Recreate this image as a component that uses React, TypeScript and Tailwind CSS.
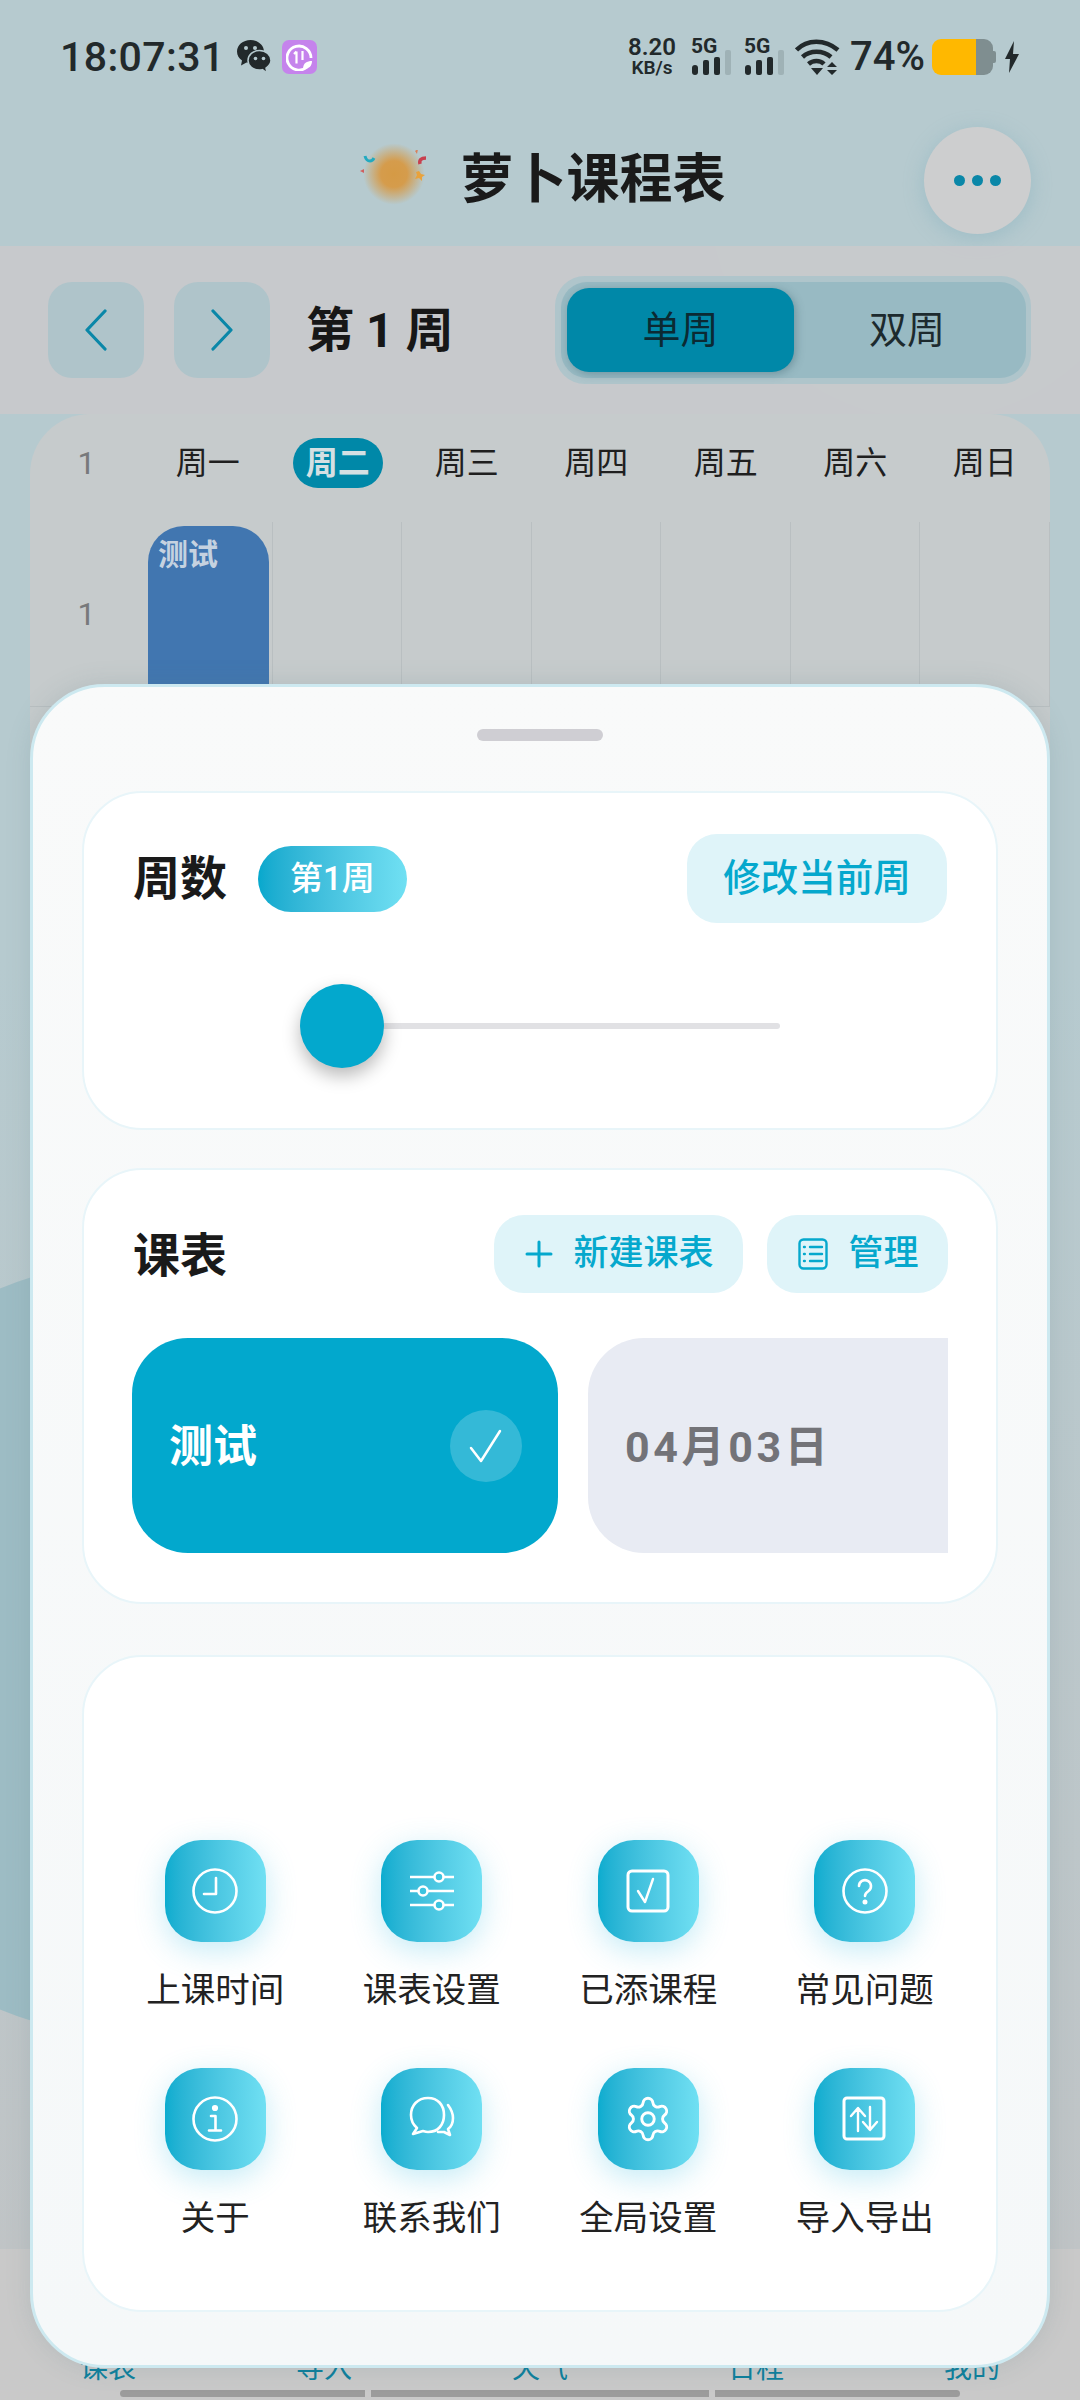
import { Settings } from 'lucide-react'
import type { ReactNode } from 'react'

const days = ['周一', '周二', '周三', '周四', '周五', '周六', '周日']
const tabs = ['课表', '导入', '天气', '日程', '我的']

function Signal() {
  return (
    <div className="flex flex-col items-start w-[42px] mb-[3px]">
      <span className="text-[21px] leading-[21px] font-bold text-[#22292b] ml-[1px]">5G</span>
      <svg width="42" height="26" viewBox="0 0 42 26" className="-mt-[7px]">
        <rect x="2" y="15" width="6" height="10" rx="3" fill="#22292b" />
        <rect x="13" y="10" width="6" height="15" rx="2" fill="#22292b" />
        <rect x="24" y="7" width="6" height="18" rx="2" fill="#22292b" />
        <rect x="35" y="0" width="6" height="25" rx="2" fill="#9fb2b6" />
      </svg>
    </div>
  )
}

function Wifi() {
  return (
    <svg width="46" height="38" viewBox="0 0 46 38" fill="none" stroke="#22292b" strokeWidth="4.5" strokeLinecap="butt">
      <path d="M1.5 12C12 1 30 1 43 12" />
      <path d="M7.5 19C15 12 28 12 36 19" />
      <path d="M13.5 26C18 22 25 22 29 26" />
      <path d="M16 30h12l-6 7z" fill="#22292b" stroke="none" />
      <path d="M32 29l5-5 5 5zM32 32h10l-5 5z" fill="#22292b" stroke="none" />
    </svg>
  )
}

function WeChat() {
  return (
    <svg width="34" height="34" viewBox="0 0 34 34">
      <path d="M13.5 0C6 0 0 5 0 11.5c0 3.800 2 7 5 9l-1 5 5.500-3c1.500.4 3 .6 4 .6C22 23 27 18 27 11.500 27 5 21 0 13.500 0z" fill="#22292b" />
      <circle cx="9" cy="8" r="2" fill="#b6cacf" />
      <circle cx="18" cy="8" r="2" fill="#b6cacf" />
      <path d="M22.500 10.500C16 10.500 11 15 11 20.500S16 30 22.500 30c1 0 2-.1 3-.4L30 33l-1-5c3-2 5-4.500 5-7.500 0-5.500-5-10-11.500-10z" fill="#22292b" stroke="#b6cacf" strokeWidth="1.500" />
      <circle cx="18.500" cy="18.500" r="1.800" fill="#b6cacf" />
      <circle cx="26.500" cy="18.500" r="1.800" fill="#b6cacf" />
    </svg>
  )
}

function AppBadge() {
  return (
    <div className="w-[35px] h-[34px] rounded-[7px] bg-[#c583ec] flex items-center justify-center">
      <svg width="27" height="27" viewBox="0 0 27 27" fill="none" stroke="#fff" strokeWidth="2.800">
        <path d="M21 23a12 12 0 1 1 4-9" />
        <path d="M10.500 7.500v12M8 10l2.500-2.500M16.500 7v9" strokeWidth="2.200" />
        <path d="M17 25c0-6 4-8 9-8 0 5-3 8-9 8z" fill="#fff" stroke="none" />
      </svg>
    </div>
  )
}

function Logo() {
  return (
    <div className="relative w-[68px] h-[60px]">
      <div className="absolute left-[3px] top-[-7px] w-[62px] h-[62px] rounded-full bg-[radial-gradient(circle,#d59a45_0%,#d59c4c_30%,rgba(205,165,100,0)_70%)]" />
      <svg width="68" height="60" viewBox="0 0 68 60" className="absolute left-0 top-0">
        <path d="M5 6c1 4 3 5 5 5s3-1 4-3" fill="none" stroke="#22aac0" strokeWidth="3" />
        <path d="M4 19l-4 2 4 2z" fill="#d0605f" />
        <path d="M55 1l3-2-1 5z" fill="#d9805a" />
        <path d="M66 8c-5 0-7 2-6 6" fill="none" stroke="#c8404f" strokeWidth="3.500" />
        <path d="M59 21l2 3 4 1-3 2 0 4-3-3-4 1 2-4-1-3z" fill="#e9a23b" />
      </svg>
    </div>
  )
}

function Sheet({ children }: { children: ReactNode }) {
  return (
    <div className="absolute left-[30px] top-[684px] w-[1020px] h-[1684px] rounded-[75px] border-[3px] border-[#cde9f0] bg-gradient-to-b from-[#f9fafa] to-[#f5f8f9] shadow-[0_0_24px_rgba(90,120,130,0.18)] px-[49px]">
      {children}
    </div>
  )
}

const iconProps = { width: 48, height: 48, viewBox: '0 0 48 48', fill: 'none', stroke: '#fff', strokeWidth: 2.6, strokeLinecap: 'round' as const, strokeLinejoin: 'round' as const }

const actions: { label: string; icon: ReactNode }[] = [
  {
    label: '上课时间',
    icon: (
      <svg {...iconProps}>
        <circle cx="24" cy="24" r="21.500" />
        <path d="M25 11v16H13" />
      </svg>
    ),
  },
  {
    label: '课表设置',
    icon: (
      <svg {...iconProps} strokeLinecap="butt">
        <path d="M2 10h44M2 24h44M2 38h44" />
        <circle cx="31" cy="10" r="4.500" fill="#3cc4e0" />
        <circle cx="15" cy="24" r="4.500" fill="#3cc4e0" />
        <circle cx="31" cy="38" r="4.500" fill="#3cc4e0" />
      </svg>
    ),
  },
  {
    label: '已添课程',
    icon: (
      <svg {...iconProps} strokeWidth="3">
        <rect x="4" y="4" width="40" height="40" rx="4" />
        <path d="M14 24l7 11 8-23" strokeWidth="2.400" />
      </svg>
    ),
  },
  {
    label: '常见问题',
    icon: (
      <svg {...iconProps}>
        <circle cx="24" cy="24" r="21.500" />
        <path d="M18 19a6 6 0 1 1 9.500 5c-2.300 1.500-3.500 2.500-3.500 5" />
        <circle cx="24" cy="35" r="1.200" fill="#fff" />
      </svg>
    ),
  },
  {
    label: '关于',
    icon: (
      <svg {...iconProps}>
        <circle cx="24" cy="24" r="21.500" />
        <circle cx="24" cy="13" r="1.800" fill="#fff" />
        <path d="M20 21h4.500v14M18 35.500h12" />
      </svg>
    ),
  },
  {
    label: '联系我们',
    icon: (
      <svg {...iconProps}>
        <path d="M20 3C10 3 3 10 3 20c0 6 2.500 10 6 13l-4 6 10-3c2 .6 3.500 1 5 1 10 0 16-7 16-17S30 3 20 3z" />
        <path d="M40 10c3 4 5 8 5 13 0 5-2 9-5 11l2 6-6-3h-6" />
      </svg>
    ),
  },
  {
    label: '全局设置',
    icon: <Settings size={50} color="#fff" strokeWidth={1.400} />,
  },
  {
    label: '导入导出',
    icon: (
      <svg {...iconProps} strokeWidth="3">
        <rect x="3" y="3" width="40" height="41" rx="3" />
        <path d="M17 36V14M10 21l7-8 7 8M29 12v22M22 27l7 8 7-8" strokeWidth="2.400" />
      </svg>
    ),
  },
]

export default function App() {
  return (
    <div className="relative w-[1080px] h-[2400px] overflow-hidden flex flex-col font-['Roboto','Noto_Sans_CJK_SC',sans-serif] text-[#1c1c1c] bg-gradient-to-b from-[#b6cacf] from-40% to-[#c0c4c6] to-[94%]">
      {/* blobs behind everything */}
      <div className="absolute left-[-241px] top-[1259px] w-[780px] h-[780px] rounded-full bg-[#9dbcc4]" />
      <div className="absolute left-[710px] top-[-20px] w-[440px] h-[440px] rounded-full bg-[#b9cfd2]" />

      {/* status bar */}
      <div className="relative h-[114px] shrink-0 flex items-center justify-between pl-[60px] pr-[61px] bg-[#b6cacf] text-[#22292b]">
        <div className="flex items-center">
          <span className="text-[41px] font-medium w-[177px] tracking-[0.4px] mt-[1px]">18:07:31</span>
          <WeChat />
          <div className="ml-[11px]">
            <AppBadge />
          </div>
        </div>
        <div className="flex items-center">
          <div className="flex flex-col items-center w-[48px] mr-[14px] font-semibold -mt-[1px]">
            <span className="text-[24px] leading-[22px]">8.20</span>
            <span className="text-[19px] leading-[20px]">KB/s</span>
          </div>
          <Signal />
          <div className="ml-[11px] mr-[10px]">
            <Signal />
          </div>
          <Wifi />
          <span className="text-[40px] font-medium ml-[9px] mr-[10px] w-[72px]">74%</span>
          <div className="flex items-center">
            <div className="flex w-[61px] h-[36px] rounded-[9px] overflow-hidden">
              <div className="w-[44px] bg-[#ffb800]" />
              <div className="flex-1 bg-[#7f8e90]" />
            </div>
            <div className="w-[3px] h-[12px] rounded-r-[2px] bg-[#7f8e90]" />
          </div>
          <svg width="14" height="32" viewBox="0 0 14 32" className="ml-[9px]">
            <path d="M9 0L0 18h5l-1 14 10-19H8z" fill="#22292b" />
          </svg>
        </div>
      </div>

      {/* title */}
      <div className="relative h-[132px] shrink-0 bg-[#b6cacf] grid grid-cols-[1fr_auto_1fr] items-center">
        <div />
        <div className="flex items-center gap-[33px] ml-[5px]">
          <Logo />
          <span className="text-[53px] leading-none font-bold text-[#1a1a1a]">萝卜课程表</span>
        </div>
        <div className="flex justify-end pr-[49px]">
          <div className="w-[107px] h-[107px] rounded-full bg-[#cdcecf] shadow-[0_4px_20px_rgba(120,170,185,0.4)] flex items-center justify-center gap-[7px]">
            <span className="w-[11px] h-[11px] rounded-full bg-[#0a87a8]" />
            <span className="w-[11px] h-[11px] rounded-full bg-[#0a87a8]" />
            <span className="w-[11px] h-[11px] rounded-full bg-[#0a87a8]" />
          </div>
        </div>
      </div>

      {/* week toolbar */}
      <div className="relative h-[168px] shrink-0 bg-[#c9c9cb]/90 flex items-center pl-[48px] pr-[49px]">
        <button className="w-[96px] h-[96px] rounded-[24px] bg-[#afc4ca] flex items-center justify-center">
          <svg width="24" height="42" viewBox="0 0 24 42" fill="none" stroke="#0a87a8" strokeWidth="3.200" strokeLinecap="round" strokeLinejoin="round">
            <path d="M21 2L3 21l18 19" />
          </svg>
        </button>
        <button className="ml-[30px] w-[96px] h-[96px] rounded-[24px] bg-[#afc4ca] flex items-center justify-center">
          <svg width="24" height="42" viewBox="0 0 24 42" fill="none" stroke="#0a87a8" strokeWidth="3.200" strokeLinecap="round" strokeLinejoin="round">
            <path d="M3 2l18 19L3 40" />
          </svg>
        </button>
        <span className="ml-[36px] mt-[2px] text-[48px] leading-none font-bold text-[#171717] whitespace-pre">第 1 周</span>
        <div className="ml-auto w-[476px] h-[108px] rounded-[30px] bg-[#afc5cb] p-[6px] pr-[5px]">
          <div className="h-full rounded-[26px] bg-[#98bac3] flex items-center p-[6px]">
            <div className="w-[227px] h-[84px] rounded-[22px] bg-[#0088a8] shadow-[2px_2px_8px_rgba(40,80,95,0.35)] flex items-center justify-center text-[38px] text-[#0b2a33] pt-[1px]">单周</div>
            <div className="flex-1 flex items-center justify-center text-[38px] text-[#1d2a2e] pt-[1px]">双周</div>
          </div>
        </div>
      </div>

      {/* timetable behind the sheet */}
      <div className="relative flex-1 mx-[30px] rounded-t-[60px] bg-[#c6cbcc]">
        <div className="flex h-[108px] items-center pb-[11px]">
          <div className="w-[113px] text-center text-[32px] text-[#77797b]">1</div>
          {days.map((d, i) => (
            <div key={d} className="w-[129.500px] flex justify-center">
              {i === 1 ? (
                <span className="ml-[1px] px-[13px] h-[50px] rounded-full bg-[#0088a8] text-[#d5e0e3] text-[32px] leading-[50px] font-bold">{d}</span>
              ) : (
                <span className="text-[32px] leading-[50px] text-[#1f1f1f]">{d}</span>
              )}
            </div>
          ))}
        </div>
        <div className="flex h-[185px] border-b border-[#b9bfc1]">
          <div className="w-[113px] flex items-center justify-center text-[32px] text-[#77797b]">1</div>
          {days.map((d, i) => (
            <div key={d} className="w-[129.500px] border-r border-[#b9bfc1] pl-[5px] pr-[3px] pt-[4px]">
              {i === 0 && (
                <div className="h-[400px] rounded-t-[36px] bg-[#4176b0] pl-[10px] pt-[11px] text-[30px] leading-[36px] font-bold text-[#c5d2e0]">测试</div>
              )}
            </div>
          ))}
        </div>
      </div>

      {/* bottom nav, mostly hidden by the sheet */}
      <div className="relative h-[151px] shrink-0 bg-[#c9c9c9] pt-[100px]">
        <div className="grid grid-cols-5 h-[40px] text-[#0c7f9c] text-[28px] leading-[40px] text-center">
          {tabs.map(t => (
            <span key={t}>{t}</span>
          ))}
        </div>
        <div className="flex justify-center gap-[6px] mt-[1px]">
          <div className="w-[245px] h-[7px] rounded-l-full bg-[#9b9b9b]" />
          <div className="w-[338px] h-[7px] bg-[#9b9b9b]" />
          <div className="w-[245px] h-[7px] rounded-r-full bg-[#9b9b9b]" />
        </div>
      </div>

      <Sheet>
        <div className="w-[126px] h-[12px] mx-auto mt-[42px] rounded-full bg-[#cfced3]" />

        {/* week card */}
        <div className="mt-[50px] h-[339px] rounded-[60px] border-[2px] border-[#e8f5f9] bg-white px-[49px] pt-[41px]">
          <div className="flex items-center h-[89px]">
            <span className="text-[47px] leading-none font-bold text-[#1a1a1a]">周数</span>
            <span className="ml-[31px] w-[149px] h-[66px] rounded-full bg-gradient-to-r from-[#05a8cd] to-[#70e0f3] flex items-center justify-center text-[33px] font-medium text-white">第1周</span>
            <button className="ml-auto w-[260px] h-[89px] rounded-[30px] bg-[#dff4f9] text-[37.500px] font-medium text-[#05a8cd]">修改当前周</button>
          </div>
          <div className="relative ml-[167px] mt-[61px] w-[480px] h-[84px] flex items-center">
            <div className="w-full h-[6px] rounded-full bg-[#e1e1e4]" />
            <div className="absolute left-0 top-0 w-[84px] h-[84px] rounded-full bg-[#03a8cd] shadow-[0_8px_18px_rgba(0,0,0,0.28)]" />
          </div>
        </div>

        {/* timetable card */}
        <div className="mt-[38px] h-[436px] rounded-[60px] border-[2px] border-[#e8f5f9] bg-white px-[48px] pt-[45px]">
          <div className="flex items-center h-[78px]">
            <span className="ml-[1px] mt-[2px] text-[47px] leading-none font-bold text-[#1a1a1a]">课表</span>
            <button className="ml-auto w-[249px] h-[78px] rounded-[30px] bg-[#dff4f9] flex items-center justify-center gap-[20px] text-[35px] font-medium text-[#05a8cd] pl-[2px]">
              <svg width="28" height="28" viewBox="0 0 28 28" stroke="#05a8cd" strokeWidth="3" strokeLinecap="round">
                <path d="M14 2v24M2 14h24" />
              </svg>
              新建课表
            </button>
            <button className="ml-[24px] w-[181px] h-[78px] rounded-[30px] bg-[#dff4f9] flex items-center justify-center gap-[20px] text-[35px] font-medium text-[#05a8cd] pl-[2px]">
              <svg width="30" height="32" viewBox="0 0 30 32" fill="none" stroke="#05a8cd" strokeWidth="2.400" strokeLinecap="round">
                <rect x="1.500" y="1.500" width="27" height="29" rx="4" />
                <path d="M12 9h12M12 16h12M12 23h12M6 9h.8M6 16h.8M6 23h.8" />
              </svg>
              管理
            </button>
          </div>
          <div className="flex gap-[30px] mt-[45px] overflow-hidden">
            <div className="w-[426px] h-[215px] shrink-0 rounded-[56px] bg-[#02a8cd] flex items-center justify-between pl-[37px] pr-[36px]">
              <span className="text-[44px] mt-[3px] font-bold text-white">测试</span>
              <div className="w-[72px] h-[72px] rounded-full bg-white/20 flex items-center justify-center">
                <svg width="36" height="36" viewBox="0 0 36 36" fill="none" stroke="#fff" strokeWidth="2.500" strokeLinecap="round" strokeLinejoin="round">
                  <path d="M3 20l10 13L32 3" />
                </svg>
              </div>
            </div>
            <div className="w-[425px] h-[215px] shrink-0 rounded-[56px] bg-[#e8ebf3] flex items-center pl-[37px] pt-[3px] text-[43px] tracking-[3.600px] font-bold text-[#737378]">04月03日</div>
          </div>
        </div>

        {/* shortcuts */}
        <div className="mt-[51px] h-[657px] rounded-[60px] border-[2px] border-[#e8f5f9] bg-white px-[23px] pt-[183px]">
          <div className="grid grid-cols-4 gap-y-[54px]">
            {actions.map(a => (
              <div key={a.label} className="flex flex-col items-center">
                <div className="w-[101px] h-[102px] rounded-[36px] bg-gradient-to-r from-[#0aaccf] to-[#70e0f3] shadow-[0_8px_30px_rgba(60,190,225,0.3)] flex items-center justify-center">
                  {a.icon}
                </div>
                <span className="mt-[24px] text-[34.500px] leading-[48px] text-[#222]">{a.label}</span>
              </div>
            ))}
          </div>
        </div>
      </Sheet>
    </div>
  )
}
